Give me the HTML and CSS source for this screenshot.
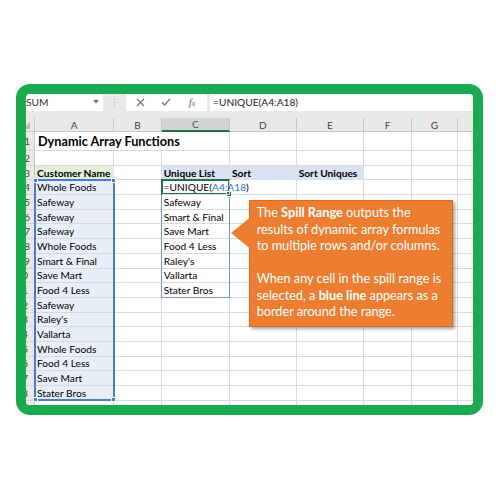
FILE: index.html
```html
<!DOCTYPE html>
<html>
<head>
<meta charset="utf-8">
<link rel="stylesheet" href="styles.css">
</head>
<body>
<div class="frame">
  <div class="fbar">
    <div class="namebox">SUM
      <svg class="dd" width="6" height="4" viewBox="0 0 6 4"><polygon points="0,0 6,0 3,3.5" fill="#707070"/></svg>
    </div>
    <div class="sep"><div class="dots"></div></div>
    <div class="btns">
      <div class="btn"><svg width="9" height="9" viewBox="0 0 9 9"><path d="M1 1 L8 8 M8 1 L1 8" stroke="#7a7a7a" stroke-width="1.2" fill="none"/></svg></div>
      <div class="btn"><svg width="10" height="8" viewBox="0 0 10 8"><path d="M0.8 4.2 L3.6 7 L9.2 0.8" stroke="#7a7a7a" stroke-width="1.3" fill="none"/></svg></div>
      <div class="btn"><span class="fx">f<span class="fxx">x</span></span></div>
    </div>
    <div class="formula">=UNIQUE(A4:A18)</div>
  </div>
  <div class="gap"></div>
  <div class="sheet">
    <div class="c h corner"><svg class="tri" width="7" height="7" viewBox="0 0 7 7"><polygon points="7,0 7,7 0,7" fill="#bcbcbc"/></svg></div>
    <div class="c h">A</div><div class="c h">B</div><div class="c h hsel">C</div><div class="c h">D</div><div class="c h">E</div><div class="c h">F</div><div class="c h">G</div><div class="c h"></div>

    <div class="c rh">1</div><div class="c title">Dynamic Array Functions</div><div class="c"></div><div class="c"></div><div class="c"></div><div class="c"></div><div class="c"></div>

    <div class="c rh">2</div><div class="c"></div><div class="c"></div><div class="c"></div><div class="c"></div><div class="c"></div><div class="c"></div><div class="c"></div><div class="c"></div>

    <div class="c rh">3</div><div class="c b g">Customer Name</div><div class="c"></div><div class="c b bl">Unique List</div><div class="c b bl">Sort</div><div class="c b bl">Sort Uniques</div><div class="c"></div><div class="c"></div><div class="c"></div>

    <div class="c rh">4</div><div class="c t">Whole Foods</div><div class="c"></div><div class="c editing">=UNIQUE(<span class="ref">A4:A18</span>)</div><div class="c"></div><div class="c"></div><div class="c"></div><div class="c"></div><div class="c"></div>

    <div class="c rh">5</div><div class="c t">Safeway</div><div class="c"></div><div class="c">Safeway</div><div class="c"></div><div class="c"></div><div class="c"></div><div class="c"></div><div class="c"></div>

    <div class="c rh">6</div><div class="c t">Safeway</div><div class="c"></div><div class="c">Smart &amp; Final</div><div class="c"></div><div class="c"></div><div class="c"></div><div class="c"></div><div class="c"></div>

    <div class="c rh">7</div><div class="c t">Safeway</div><div class="c"></div><div class="c">Save Mart</div><div class="c"></div><div class="c"></div><div class="c"></div><div class="c"></div><div class="c"></div>

    <div class="c rh">8</div><div class="c t">Whole Foods</div><div class="c"></div><div class="c">Food 4 Less</div><div class="c"></div><div class="c"></div><div class="c"></div><div class="c"></div><div class="c"></div>

    <div class="c rh">9</div><div class="c t">Smart &amp; Final</div><div class="c"></div><div class="c">Raley's</div><div class="c"></div><div class="c"></div><div class="c"></div><div class="c"></div><div class="c"></div>

    <div class="c rh d2">10</div><div class="c t">Save Mart</div><div class="c"></div><div class="c">Vallarta</div><div class="c"></div><div class="c"></div><div class="c"></div><div class="c"></div><div class="c"></div>

    <div class="c rh d2">11</div><div class="c t">Food 4 Less</div><div class="c"></div><div class="c">Stater Bros</div><div class="c"></div><div class="c"></div><div class="c"></div><div class="c"></div><div class="c"></div>

    <div class="c rh d2">12</div><div class="c t">Safeway</div><div class="c"></div><div class="c"></div><div class="c"></div><div class="c"></div><div class="c"></div><div class="c"></div><div class="c"></div>

    <div class="c rh d2">13</div><div class="c t">Raley's</div><div class="c"></div><div class="c"></div><div class="c"></div><div class="c"></div><div class="c"></div><div class="c"></div><div class="c"></div>

    <div class="c rh d2">14</div><div class="c t">Vallarta</div><div class="c"></div><div class="c"></div><div class="c"></div><div class="c"></div><div class="c"></div><div class="c"></div><div class="c"></div>

    <div class="c rh d2">15</div><div class="c t">Whole Foods</div><div class="c"></div><div class="c"></div><div class="c"></div><div class="c"></div><div class="c"></div><div class="c"></div><div class="c"></div>

    <div class="c rh d2">16</div><div class="c t">Food 4 Less</div><div class="c"></div><div class="c"></div><div class="c"></div><div class="c"></div><div class="c"></div><div class="c"></div><div class="c"></div>

    <div class="c rh d2">17</div><div class="c t">Save Mart</div><div class="c"></div><div class="c"></div><div class="c"></div><div class="c"></div><div class="c"></div><div class="c"></div><div class="c"></div>

    <div class="c rh d2">18</div><div class="c t">Stater Bros</div><div class="c"></div><div class="c"></div><div class="c"></div><div class="c"></div><div class="c"></div><div class="c"></div><div class="c"></div>

    <div class="c rh d2">19</div><div class="c"></div><div class="c"></div><div class="c"></div><div class="c"></div><div class="c"></div><div class="c"></div><div class="c"></div><div class="c"></div>

    <div class="range">
      <span class="handle tl"></span><span class="handle tr"></span><span class="handle bl2"></span><span class="handle br"></span>
    </div>
    <div class="spill"></div>
    <div class="active"><span class="ghandle"></span></div>

    <div class="callout">
      <svg class="arrow" width="19" height="32" viewBox="0 0 19 32"><polygon points="19.5,0 0,16 19.5,32" fill="#ed7d31"/></svg>
      The <b>Spill Range</b> outputs the<br>
      results of dynamic array formulas<br>
      to multiple rows and/or columns.<br>
      <br>
      When any cell in the spill range is<br>
      selected, a <b>blue line</b> appears as a<br>
      border around the range.
    </div>
  </div>
</div>
</body>
</html>
```

FILE: styles.css
```css
* { box-sizing: border-box; }
body { margin: 0; background: #fff; font-family: Lato, "Open Sans", sans-serif; }

.frame {
  width: 467px;
  height: 331px;
  margin: 84px 0 0 16px;
  border: 10px solid #1aab50;
  border-radius: 14px;
  overflow: hidden;
  background: #e9e9e9;
}

.fbar { display: flex; height: 16.5px; margin-left: -12px; font-size: 10.2px; color: #333; }
.namebox { width: 89px; background: #fff; position: relative; display: flex; align-items: center; padding-left: 12px; }
.dd { position: absolute; right: 4px; top: 6px; }
.sep { width: 23px; display: flex; justify-content: center; align-items: center; }
.dots { width: 1px; height: 7px; background: repeating-linear-gradient(#a0a0a0 0 1px, transparent 1px 3px); }
.btns { width: 81px; background: #fff; display: flex; padding-left: 1px; }
.btn { width: 26px; display: flex; align-items: center; justify-content: center; }
.fx { font-family: "Liberation Serif", serif; font-style: italic; font-size: 11px; color: #6e6e6e; }
.fxx { font-size: 8px; }
.formula { flex: 1; margin-left: 3px; background: #fff; display: flex; align-items: center; padding-left: 3px; color: #222; }
.gap { height: 7.8px; }

.sheet {
  display: grid;
  position: relative;
  margin-left: -12px;
  grid-template-columns: 21px 79.3px 47.4px 68.3px 66.7px 67.6px 47.4px 46.6px 40px;
  grid-template-rows: 14px 18.4px 15px repeat(17, 14.7px);
  background: #fff;
  font-size: 10.2px;
}

.c {
  border-right: 1px solid #dadada;
  border-bottom: 1px solid #dadada;
  display: flex;
  align-items: center;
  padding-left: 2px;
  white-space: nowrap;
  color: #000;
  min-width: 0;
}
.h { background: #e9e9e9; border-right-color: #c8c8c8; border-bottom-color: #c8c8c8; justify-content: center; padding-left: 0; color: #444; font-size: 10px; }
.corner { position: relative; }
.tri { position: absolute; right: 4px; bottom: 2px; }
.hsel { background: #d4d4d4; color: #217346; border-bottom: 2px solid #217346; }
.rh { background: #e9e9e9; border-right-color: #c8c8c8; border-bottom-color: #d6d6d6; justify-content: flex-end; padding: 0 4px 0 0; color: #444; font-size: 10px; }
.rh.d2 { padding-right: 6px; }
.title { grid-column: span 3; font-weight: 700; font-size: 12.7px; padding-left: 3px; }
.b { font-weight: 700; }
.g { background: #e2efda; border-right-color: #e2efda; border-bottom-color: #e2efda; }
.bl { background: #d9e1f2; border-right-color: #d9e1f2; border-bottom-color: #d9e1f2; }
.t { background: #e9eff9; }
.ref { color: #3b6fc8; }
.editing { position: relative; z-index: 3; }

.range { position: absolute; grid-column: 2 / 3; grid-row: 5 / 20; top: -1px; left: -1px; right: -1px; bottom: 0; border: 2px solid #4a7bd3; }
.handle { position: absolute; width: 5px; height: 5px; background: #4a7bd3; border: 1px solid #fff; }
.tl { top: -3px; left: -3px; }
.tr { top: -3px; right: -3px; }
.bl2 { bottom: -3px; left: -3px; }
.br { bottom: -3px; right: -3px; }

.spill { position: absolute; grid-column: 4 / 5; grid-row: 5 / 13; top: -1px; left: -1px; right: 0; bottom: 0; border: 1px solid #7096dc; }
.active { position: absolute; grid-column: 4 / 5; grid-row: 5 / 6; top: -1px; left: -1px; right: 0; bottom: 0; border: 2px solid #217346; }
.ghandle { position: absolute; right: -4px; bottom: -4px; width: 6px; height: 6px; background: #217346; border: 1px solid #fff; }

.callout {
  position: absolute;
  left: 235.3px;
  top: 81.4px;
  width: 204px;
  height: 127.6px;
  background: #ed7d31;
  border: 1px solid #d96b25;
  color: #fff;
  font-size: 12.7px;
  line-height: 16.5px;
  padding: 3.4px 0 0 6.4px;
  box-shadow: 2px 2px 3px rgba(0, 0, 0, 0.35);
  white-space: nowrap;
  z-index: 5;
}
.arrow { position: absolute; left: -19.6px; top: 16.6px; }
```
